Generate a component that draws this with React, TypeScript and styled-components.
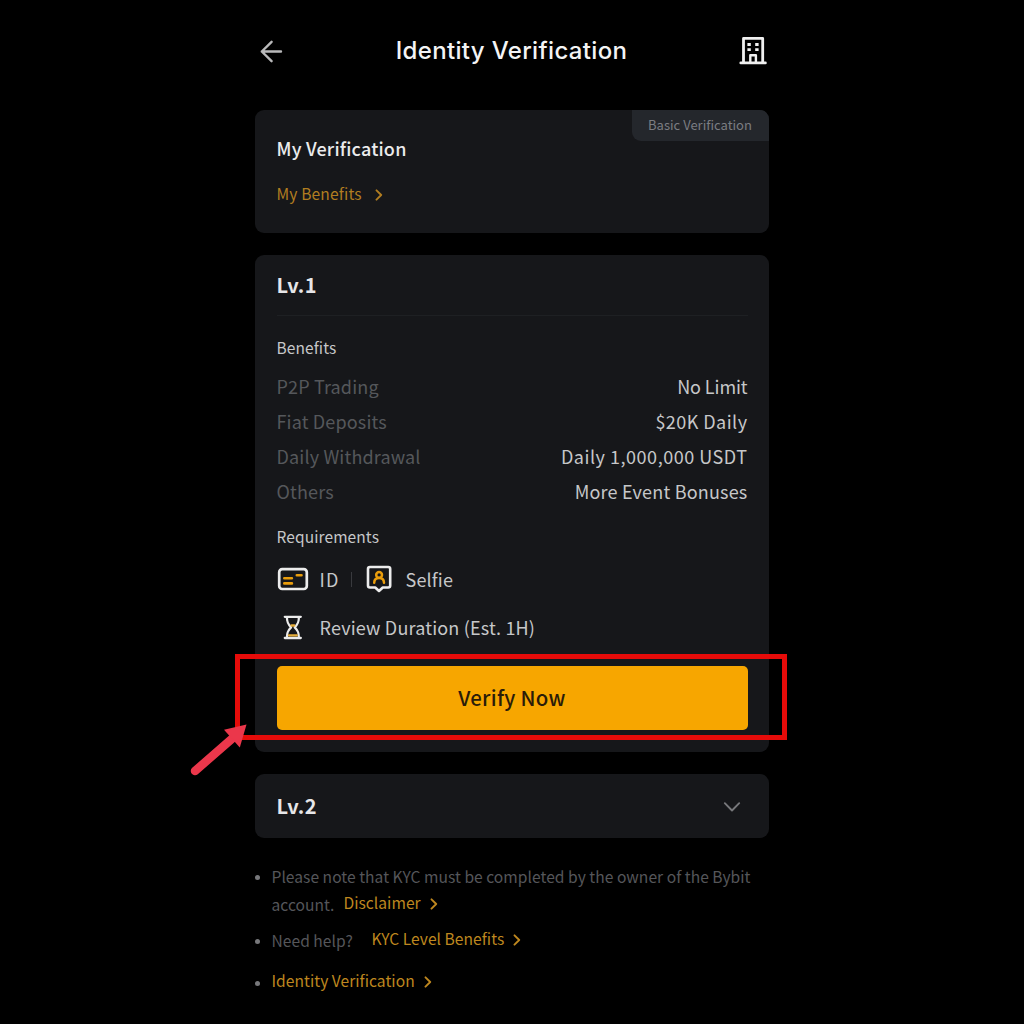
import React from "react";
import styled, { createGlobalStyle } from "styled-components";

const GlobalStyle = createGlobalStyle`
  * { box-sizing: border-box; }
  body { margin: 0; background: #000; }
`;

const Page = styled.main`
  width: 1024px;
  height: 1024px;
  overflow: hidden;
  background: #000;
  color: #c6c7c9;
  font-family: "Noto Sans CJK SC", "Noto Sans", sans-serif;
  font-size: 18px;
  white-space: nowrap;
`;

const Column = styled.div`
  width: 514px;
  margin: 0 auto;
  position: relative;
`;

const Header = styled.header`
  display: grid;
  grid-template-columns: 1fr auto 1fr;
  align-items: center;
  height: 102px;
  padding: 0 2px 0 5px;
  margin-bottom: 8px;
`;

const Title = styled.h1`
  margin: 0 0 0 -4px;
  font: 550 24px/30px Inter, sans-serif;
  letter-spacing: 0.34px;
  color: #f4f4f5;
`;

const IconSlot = styled.div<{ $end?: boolean }>`
  display: flex;
  justify-content: ${(p) => (p.$end ? "flex-end" : "flex-start")};
`;

const Card = styled.section<{ $height: number; $gap?: number }>`
  position: relative;
  height: ${(p) => p.$height}px;
  margin-bottom: ${(p) => p.$gap ?? 0}px;
  padding: 0 21.5px;
  border-radius: 9px;
  background: #16171a;
`;

const Badge = styled.span`
  position: absolute;
  top: 0;
  right: 0;
  width: 137px;
  height: 31px;
  padding-right: 1px;
  border-radius: 0 9px 0 9px;
  background: #24272c;
  color: #7b7d82;
  font-size: 13px;
  line-height: 30px;
  text-align: center;
`;

const CardTitle = styled.h2`
  margin: 0;
  padding-top: 25px;
  font-size: 18px;
  font-weight: 500;
  line-height: 26px;
  letter-spacing: 0.2px;
  color: #ebebec;
`;

const Link = styled.a<{ $gap?: number }>`
  display: inline-flex;
  align-items: center;
  gap: ${(p) => p.$gap ?? 9}px;
  font-size: 15.6px;
  line-height: 24px;
  color: #be871f;
`;

const BenefitLink = styled(Link)`
  margin-top: 20px;
  letter-spacing: 0.14px;
  color: #b17d20;
`;

const LevelTitle = styled.h2<{ $height: number }>`
  margin: 0;
  font-size: 20px;
  font-weight: 700;
  line-height: ${(p) => p.$height}px;
  letter-spacing: 0.3px;
  color: #e6e6e8;
`;

const Divider = styled.hr`
  height: 1px;
  margin: 0;
  border: 0;
  background: #1e2023;
`;

const SubHeading = styled.h3<{ $top: number }>`
  margin: ${(p) => p.$top}px 0 0;
  font-size: 15.5px;
  font-weight: 400;
  line-height: 20px;
  letter-spacing: 0.1px;
`;

const Benefits = styled.dl`
  margin: 12px 0 0;
`;

const BenefitRow = styled.div`
  display: flex;
  justify-content: space-between;
  height: 35px;
  line-height: 35px;
  letter-spacing: 0.15px;
`;

const Term = styled.dt`
  color: #55575b;
`;

const Value = styled.dd<{ $spacing?: number }>`
  margin: 0;
  letter-spacing: ${(p) => p.$spacing ?? 0.1}px;
`;

const Requirement = styled.div<{ $top: number }>`
  display: flex;
  align-items: center;
  height: 28px;
  margin-top: ${(p) => p.$top}px;
  line-height: 28px;
  letter-spacing: 0.17px;
`;

const RequirementIcon = styled.span<{ $width: number }>`
  display: flex;
  width: ${(p) => p.$width}px;
`;

const IdLabel = styled.span`
  width: 20px;
  letter-spacing: 1.2px;
`;

const Separator = styled.span`
  width: 1px;
  height: 15px;
  margin: 0 14px 0 11px;
  background: #393a3e;
`;

const VerifyButton = styled.button`
  display: block;
  width: 471px;
  height: 64px;
  margin-top: 25px;
  padding: 0 0 2px;
  border: 0;
  border-radius: 5px;
  background: #f7a600;
  color: #2a1c09;
  font: 500 20.4px/62px "Noto Sans CJK SC", "Noto Sans", sans-serif;
  letter-spacing: 0.3px;
`;

const Highlight = styled.div`
  position: absolute;
  top: 399px;
  left: -20px;
  width: 552px;
  height: 86px;
  border: 5px solid #e60b09;
  pointer-events: none;
`;

const Pointer = styled.svg`
  position: absolute;
  top: 466px;
  left: -67px;
`;

const LevelRow = styled.div`
  display: flex;
  align-items: center;
  justify-content: space-between;
  padding-right: 7px;
`;

const Notes = styled.ul`
  margin: 24px 0 0;
  padding: 0;
  list-style: none;
  font-size: 15.6px;
  line-height: 28px;
  color: #55565a;
`;

const Note = styled.li<{ $bottom?: number }>`
  display: grid;
  grid-template-columns: 16.5px 1fr;
  margin-bottom: ${(p) => p.$bottom ?? 0}px;
`;

const Bullet = styled.span`
  width: 5px;
  height: 5px;
  margin-top: 13px;
  border-radius: 50%;
  background: #77787b;
`;

const NoteLine = styled.div<{ $gap?: number }>`
  display: flex;
  align-items: flex-start;
  gap: ${(p) => p.$gap ?? 0}px;
  height: 28px;
  letter-spacing: 0.03px;
`;

const ChevronIcon = styled.svg<{ $drop?: boolean }>`
  margin-top: ${(p) => (p.$drop ? 3 : 1)}px;
`;

function Chevron({ drop }: { drop?: boolean }) {
  return (
    <ChevronIcon $drop={drop} width="8" height="12" viewBox="0 0 8 12" fill="none" stroke="currentColor" strokeWidth="1.9" strokeLinecap="round" strokeLinejoin="round">
      <path d="M1.500 1.300 6.200 6 1.500 10.700" />
    </ChevronIcon>
  );
}

const benefits = [
  { name: "P2P Trading", value: "No Limit", spacing: -0.1 },
  { name: "Fiat Deposits", value: "$20K Daily", spacing: 0.45 },
  { name: "Daily Withdrawal", value: "Daily 1,000,000 USDT", spacing: 0.52 },
  { name: "Others", value: "More Event Bonuses", spacing: 0.2 },
];

export default function App() {
  return (
    <Page>
      <GlobalStyle />
      <Column>
        <Header>
          <IconSlot>
            <svg width="23" height="24" viewBox="0 0 23 24" fill="none" stroke="#b9b9ba" strokeWidth="2.4" strokeLinecap="round" strokeLinejoin="round">
              <path d="M21 12.500H1.800M11.600 2.800 1.800 12.500 11.600 22.200" />
            </svg>
          </IconSlot>
          <Title>Identity Verification</Title>
          <IconSlot $end>
            <svg width="28" height="30" viewBox="0 0 28 30" fill="none" stroke="#f0f0f0" strokeWidth="2.8" strokeLinejoin="round" strokeLinecap="round">
              <path d="M4.500 26.500V2.400h19.200v24.100M1.800 26.900h24.600" />
              <path d="M11.300 26V19.300h5.600V26" strokeWidth="2.400" />
              <path d="M8.400 8.500h3.400M16.200 8.500h3.400M8.400 13.700h3.400M16.200 13.700h3.400" strokeWidth="2.800" strokeLinecap="butt" />
            </svg>
          </IconSlot>
        </Header>

        <Card $height={123} $gap={22}>
          <Badge>Basic Verification</Badge>
          <CardTitle>My Verification</CardTitle>
          <BenefitLink $gap={13}>
            My Benefits <Chevron drop />
          </BenefitLink>
        </Card>

        <Card $height={497} $gap={22}>
          <LevelTitle $height={60}>Lv.1</LevelTitle>
          <Divider />
          <SubHeading $top={21}>Benefits</SubHeading>
          <Benefits>
            {benefits.map((b) => (
              <BenefitRow key={b.name}>
                <Term>{b.name}</Term>
                <Value $spacing={b.spacing}>{b.value}</Value>
              </BenefitRow>
            ))}
          </Benefits>
          <SubHeading $top={17}>Requirements</SubHeading>
          <Requirement $top={19}>
            <RequirementIcon $width={43}>
              <svg width="32" height="24" viewBox="0 0 32 24" fill="none">
                <rect x="2.200" y="2.200" width="27.600" height="19.800" rx="3" stroke="#ececec" strokeWidth="2.700" />
                <path d="M7.300 11.300h7.600M7.300 16.400h7.600M19.800 8.300h4.700" stroke="#e99d0c" strokeWidth="2.600" strokeLinecap="round" />
              </svg>
            </RequirementIcon>
            <IdLabel>ID</IdLabel>
            <Separator />
            <RequirementIcon $width={40}>
              <svg width="26" height="28" viewBox="0 0 26 28" fill="none" strokeLinejoin="round">
                <path d="M4 2h18.200a2 2 0 0 1 2 2v16.500a2 2 0 0 1-2 2h-5.400L13 26l-3.800-3.500H4a2 2 0 0 1-2-2V4a2 2 0 0 1 2-2Z" stroke="#ececec" strokeWidth="2.600" />
                <circle cx="13.100" cy="9.900" r="2.900" stroke="#e99d0c" strokeWidth="2.500" />
                <path d="M8.200 17.800c.1-3.200 1.900-4.700 4.900-4.700s4.800 1.500 4.900 4.700" stroke="#e99d0c" strokeWidth="2.500" strokeLinecap="round" />
              </svg>
            </RequirementIcon>
            Selfie
          </Requirement>
          <Requirement $top={20}>
            <RequirementIcon $width={43}>
              <svg width="32" height="26" viewBox="0 0 32 26" fill="none" strokeLinecap="round" strokeLinejoin="round">
                <path d="M7.800 2.800h16M7.800 24h16M9.900 3c0 5 .8 7 4.200 10.300-3.400 3.300-4.200 5.300-4.200 10.400M21.900 3c0 5-.8 7-4.200 10.300 3.400 3.300 4.200 5.300 4.200 10.400" stroke="#ececec" strokeWidth="2.300" />
                <path d="M14.500 11.500h2.800M11.900 21.300h8" stroke="#e5ad3b" strokeWidth="2.300" />
              </svg>
            </RequirementIcon>
            Review Duration (Est. 1H)
          </Requirement>
          <VerifyButton>Verify Now</VerifyButton>
          <Highlight />
          <Pointer width="62" height="60" viewBox="0 0 62 60">
            <path d="M7 50 46 16" stroke="#eb374b" strokeWidth="8.500" strokeLinecap="round" />
            <path d="M58.500 3.500 36 8.800 51.800 26.400Z" fill="#eb374b" />
          </Pointer>
        </Card>

        <Card $height={64}>
          <LevelRow>
            <LevelTitle $height={63}>Lv.2</LevelTitle>
            <svg width="18" height="12" viewBox="0 0 18 12" fill="none" stroke="#77787b" strokeWidth="1.900" strokeLinecap="round" strokeLinejoin="round">
              <path d="M1.800 3.200 9 10.500 16.200 3.200" />
            </svg>
          </LevelRow>
        </Card>

        <Notes>
          <Note $bottom={8}>
            <Bullet />
            <div>
              <NoteLine>Please note that KYC must be completed by the owner of the Bybit</NoteLine>
              <NoteLine $gap={9}>
                account.
                <Link>
                  Disclaimer <Chevron drop />
                </Link>
              </NoteLine>
            </div>
          </Note>
          <Note $bottom={14}>
            <Bullet />
            <NoteLine $gap={18.5}>
              Need help?
              <Link>
                KYC Level Benefits <Chevron drop />
              </Link>
            </NoteLine>
          </Note>
          <Note>
            <Bullet />
            <NoteLine>
              <Link>
                Identity Verification <Chevron drop />
              </Link>
            </NoteLine>
          </Note>
        </Notes>
      </Column>
    </Page>
  );
}
